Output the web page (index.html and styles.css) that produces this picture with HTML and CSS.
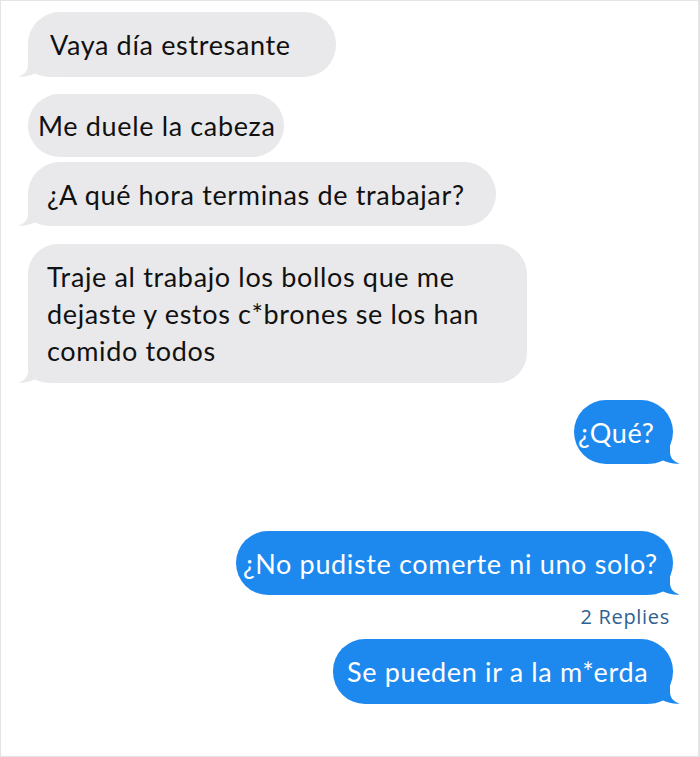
FILE: index.html
```html
<!DOCTYPE html>
<html lang="es">
<head>
<meta charset="utf-8">
<link rel="stylesheet" href="styles.css">
</head>
<body>
<div class="screen">
  <div class="bubble in b1">Vaya día estresante
    <svg class="tail tail-l" viewBox="0 0 40 34"><path d="M10,0 L10,22 C10,28 6,32 0,33.5 C6,34 12,33 17,30.5 C22,33 27,34 34,34 L40,34 L40,0 Z"/></svg>
  </div>
  <div class="bubble in b2">Me duele la cabeza</div>
  <div class="bubble in b3">¿A qué hora terminas de trabajar?
    <svg class="tail tail-l" viewBox="0 0 40 34"><path d="M10,0 L10,22 C10,28 6,32 0,33.5 C6,34 12,33 17,30.5 C22,33 27,34 34,34 L40,34 L40,0 Z"/></svg>
  </div>
  <div class="bubble in b4">Traje al trabajo los bollos que me dejaste y estos c*brones se los han comido todos
    <svg class="tail tail-l" viewBox="0 0 40 34"><path d="M10,0 L10,22 C10,28 6,32 0,33.5 C6,34 12,33 17,30.5 C22,33 27,34 34,34 L40,34 L40,0 Z"/></svg>
  </div>
  <div class="bubble out o1">¿Qué?
    <svg class="tail tail-r" viewBox="0 0 40 34"><path d="M30,0 L30,22 C30,28 34,32 40,33.5 C34,34 28,33 23,30.5 C18,33 13,34 6,34 L0,34 L0,0 Z"/></svg>
  </div>
  <div class="bubble out o2">¿No pudiste comerte ni uno solo?
    <svg class="tail tail-r" viewBox="0 0 40 34"><path d="M30,0 L30,22 C30,28 34,32 40,33.5 C34,34 28,33 23,30.5 C18,33 13,34 6,34 L0,34 L0,0 Z"/></svg>
  </div>
  <div class="replies">2 Replies</div>
  <div class="bubble out o3">Se pueden ir a la m*erda
    <svg class="tail tail-r" viewBox="0 0 40 34"><path d="M30,0 L30,22 C30,28 34,32 40,33.5 C34,34 28,33 23,30.5 C18,33 13,34 6,34 L0,34 L0,0 Z"/></svg>
  </div>
</div>
</body>
</html>
```
FILE: styles.css
```css
* { box-sizing: border-box; }
html, body { margin: 0; padding: 0; background: #fff; }
.screen {
  width: 700px;
  height: 757px;
  border: 1px solid #e4e4e4;
  border-right-width: 2px;
  padding: 11px 25px 0 27px;
  display: flex;
  flex-direction: column;
  align-items: flex-start;
  font-family: Lato, "Open Sans", sans-serif;
  font-size: 27px;
  letter-spacing: 0.65px;
  overflow: hidden;
}
.bubble {
  position: relative;
  isolation: isolate;
  display: flex;
  align-items: center;
  height: 64px;
  border-radius: 32px;
  line-height: 37px;
  white-space: nowrap;
}
.in { background: #e9e9eb; color: #111; }
.out { background: #1d88ee; color: #fff; align-self: flex-end; }
.tail {
  position: absolute;
  bottom: 0;
  width: 40px;
  height: 34px;
  z-index: -1;
}
.tail-l { left: -10px; }
.tail-r { right: -7px; }
.in .tail path { fill: #e9e9eb; }
.out .tail path { fill: #1d88ee; }
.b1 { width: 308px; height: 65px; padding-left: 22px; }
.b2 { width: 256px; height: 63px; margin-top: 17px; padding-left: 10px; }
.b3 { width: 468px; margin-top: 5px; padding-left: 19px; }
.b4 {
  width: 499px;
  height: 139px;
  margin-top: 18px;
  padding: 0 20px 0 19px;
  white-space: normal;
  border-radius: 30px;
  line-height: 37px;
}
.o1 { width: 99px; margin-top: 17px; padding-left: 4px; }
.o2 { width: 437px; margin-top: 67px; padding-left: 7px; }
.o3 { width: 340px; height: 65px; margin-top: 0; padding-left: 14px; }
.replies {
  align-self: flex-end;
  margin: 10px 3px 10px 0;
  font-family: "Open Sans", Lato, sans-serif;
  font-size: 20px;
  font-weight: 500;
  letter-spacing: 0.7px;
  line-height: 24px;
  color: #2f6190;
}
```
